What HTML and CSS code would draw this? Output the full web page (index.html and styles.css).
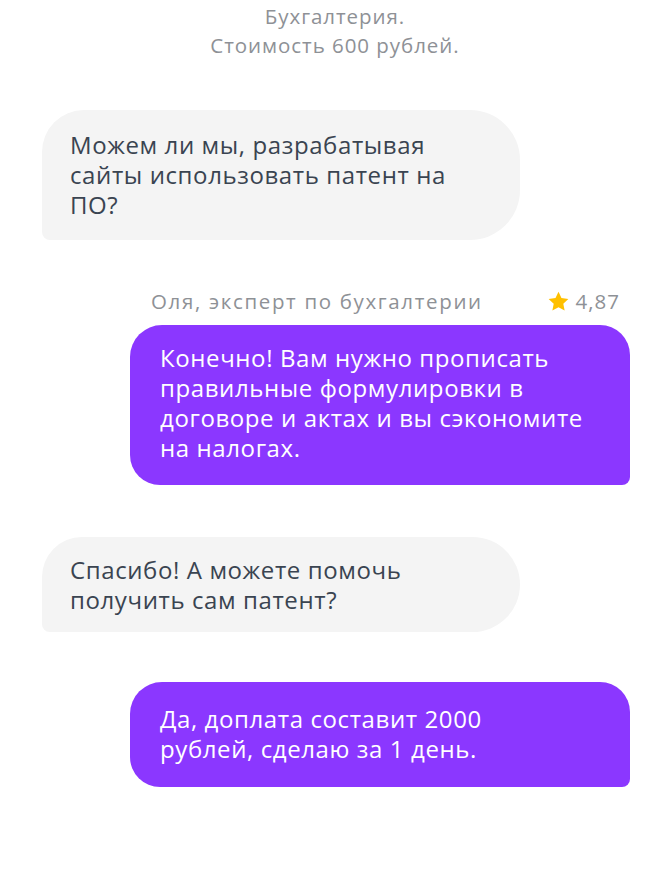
FILE: index.html
```html
<!DOCTYPE html>
<html lang="ru">
<head>
<meta charset="utf-8">
<link rel="stylesheet" href="styles.css">
</head>
<body>
<div class="chat">
  <div class="notice">Бухгалтерия.<br>Стоимость 600 рублей.</div>

  <div class="msg msg--in">
    <div class="bubble bubble--in b1">Можем ли мы, разрабатывая<br>сайты использовать патент на<br>ПО?</div>
  </div>

  <div class="msg msg--out">
    <div class="meta">
      <span class="meta__name">Оля, эксперт по бухгалтерии</span>
      <span class="meta__rating">
        <svg class="star" viewBox="0 0 24 24" width="23" height="23"><path d="M12 1.8l3.1 6.6 7.2.9-5.3 5 1.4 7.1L12 17.9l-6.4 3.5 1.4-7.1-5.3-5 7.2-.9z" fill="#ffc000"/></svg>
        4,87
      </span>
    </div>
    <div class="bubble bubble--out b2">Конечно! Вам нужно прописать<br>правильные формулировки в<br>договоре и актах и вы сэкономите<br>на налогах.</div>
  </div>

  <div class="msg msg--in">
    <div class="bubble bubble--in b3">Спасибо! А можете помочь<br>получить сам патент?</div>
  </div>

  <div class="msg msg--out">
    <div class="bubble bubble--out b4">Да, доплата составит 2000<br>рублей, сделаю за 1 день.</div>
  </div>
</div>
</body>
</html>
```

FILE: styles.css
```css
html, body {
  margin: 0;
  padding: 0;
  background: #ffffff;
}

body {
  font-family: "Open Sans", "Noto Sans", sans-serif;
  width: 670px;
  height: 880px;
  overflow: hidden;
}

.chat {
  display: flex;
  flex-direction: column;
  padding-top: 2px;
}

.notice {
  text-align: center;
  color: #8e9196;
  font-size: 20.5px;
  letter-spacing: 0.95px;
  line-height: 29px;
  margin-bottom: 50px;
}

.msg {
  display: flex;
  flex-direction: column;
}

.msg--in {
  padding-left: 42px;
  width: 478px;
}

.msg--out {
  padding-left: 130px;
  width: 500px;
}

.bubble {
  font-size: 24px;
  letter-spacing: 0.6px;
  line-height: 30px;
  white-space: nowrap;
}

.bubble--in {
  background: #f4f4f4;
  color: #3a4451;
  padding: 20px 28px;
  border-radius: 42px 50px 50px 8px;
}

.bubble--out {
  background: #8b37ff;
  color: #ffffff;
  padding: 18px 30px 22px 30px;
  border-radius: 32px 30px 8px 30px;
}

.b1 {
  margin-bottom: 47px;
}

.b2 {
  margin-bottom: 52px;
}

.b3 {
  padding-top: 18px;
  padding-bottom: 17px;
  margin-bottom: 50px;
}

.b4 {
  padding-top: 22px;
  padding-bottom: 23px;
}

.meta {
  display: flex;
  justify-content: space-between;
  align-items: center;
  padding: 0 10px 0 21px;
  color: #8e9196;
  font-size: 20.5px;
  letter-spacing: 1.65px;
  line-height: 28px;
  margin-bottom: 10px;
}

.meta__rating {
  display: flex;
  align-items: center;
  gap: 6px;
  letter-spacing: 1px;
}

.star {
  display: block;
}
```
